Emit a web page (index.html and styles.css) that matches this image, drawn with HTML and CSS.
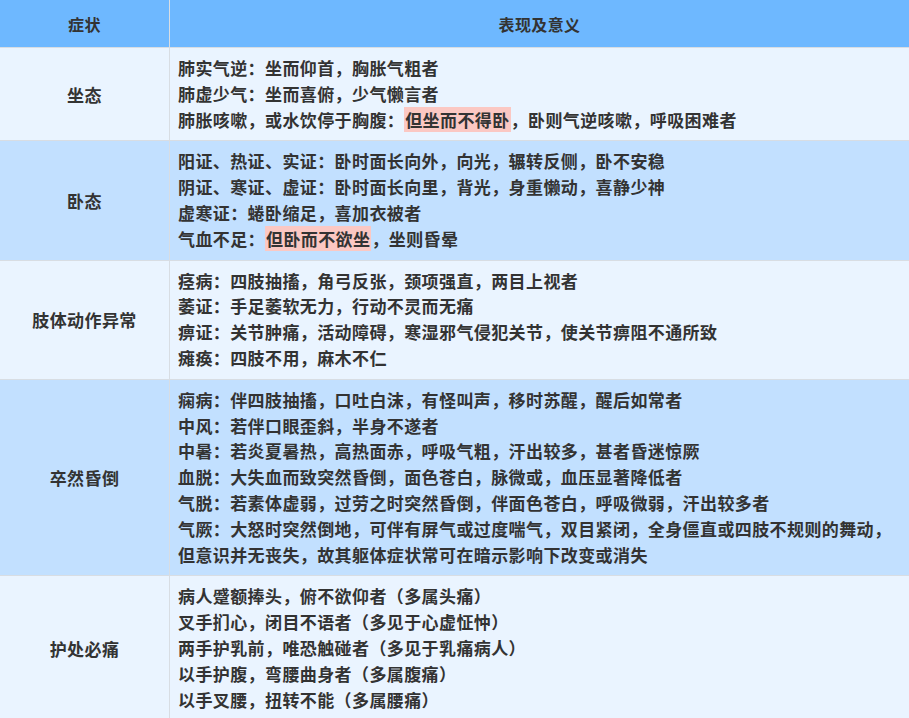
FILE: index.html
```html
<!DOCTYPE html>
<html lang="zh">
<head>
<meta charset="utf-8">
<link rel="stylesheet" href="styles.css">
</head>
<body>
<table class="sym">
  <thead>
    <tr><th class="c1">症状</th><th class="c2">表现及意义</th></tr>
  </thead>
  <tbody>
    <tr class="light">
      <td class="c1">坐态</td>
      <td class="c2">
        <div>肺实气逆：坐而仰首，胸胀气粗者</div>
        <div>肺虚少气：坐而喜俯，少气懒言者</div>
        <div>肺胀咳嗽，或水饮停于胸腹：<span class="hl">但坐而不得卧</span>，卧则气逆咳嗽，呼吸困难者</div>
      </td>
    </tr>
    <tr class="dark">
      <td class="c1">卧态</td>
      <td class="c2">
        <div>阳证、热证、实证：卧时面长向外，向光，辗转反侧，卧不安稳</div>
        <div>阴证、寒证、虚证：卧时面长向里，背光，身重懒动，喜静少神</div>
        <div>虚寒证：蜷卧缩足，喜加衣被者</div>
        <div>气血不足：<span class="hl">但卧而不欲坐</span>，坐则昏晕</div>
      </td>
    </tr>
    <tr class="light">
      <td class="c1">肢体动作异常</td>
      <td class="c2">
        <div>痉病：四肢抽搐，角弓反张，颈项强直，两目上视者</div>
        <div>萎证：手足萎软无力，行动不灵而无痛</div>
        <div>痹证：关节肿痛，活动障碍，寒湿邪气侵犯关节，使关节痹阻不通所致</div>
        <div>瘫痪：四肢不用，麻木不仁</div>
      </td>
    </tr>
    <tr class="dark">
      <td class="c1">卒然昏倒</td>
      <td class="c2">
        <div>痫病：伴四肢抽搐，口吐白沫，有怪叫声，移时苏醒，醒后如常者</div>
        <div>中风：若伴口眼歪斜，半身不遂者</div>
        <div>中暑：若炎夏暑热，高热面赤，呼吸气粗，汗出较多，甚者昏迷惊厥</div>
        <div>血脱：大失血而致突然昏倒，面色苍白，脉微或，血压显著降低者</div>
        <div>气脱：若素体虚弱，过劳之时突然昏倒，伴面色苍白，呼吸微弱，汗出较多者</div>
        <div>气厥：大怒时突然倒地，可伴有屏气或过度喘气，双目紧闭，全身僵直或四肢不规则的舞动，<br>但意识并无丧失，故其躯体症状常可在暗示影响下改变或消失</div>
      </td>
    </tr>
    <tr class="light">
      <td class="c1">护处必痛</td>
      <td class="c2">
        <div>病人蹙额捧头，俯不欲仰者（多属头痛）</div>
        <div>叉手扪心，闭目不语者（多见于心虚怔忡）</div>
        <div>两手护乳前，唯恐触碰者（多见于乳痛病人）</div>
        <div>以手护腹，弯腰曲身者（多属腹痛）</div>
        <div>以手叉腰，扭转不能（多属腰痛）</div>
      </td>
    </tr>
  </tbody>
</table>
</body>
</html>
```
FILE: styles.css
```css
html, body {
  margin: 0;
  padding: 0;
  background: #eaf4ff;
}
.sym {
  width: 909px;
  border-collapse: collapse;
  font-family: "Noto Sans CJK SC", "Noto Sans", sans-serif;
  font-size: 17px;
  font-weight: 600;
  color: #333;
  letter-spacing: 0.4px;
}
.sym th, .sym td {
  border: 1px solid #d8dde3;
  border-top: 0;
}
.sym th:first-child, .sym td:first-child { border-left: 0; }
.sym th:last-child, .sym td:last-child { border-right: 0; }
.sym th {
  background: #6eb8ff;
  height: 47px;
  padding: 0;
  font-weight: 700;
  font-size: 16px;
}
.sym tr.light td { background: #eaf4ff; border-top: 1px solid #d8dde3; }
.sym tr.dark td { background: #c2e0ff; border-top: 1px solid #d8dde3; }
.sym td.c1 {
  width: 169px;
  text-align: center;
  vertical-align: middle;
  padding: 0;
}
.sym td.c2 {
  padding: 7px 8px 8px 8px;
  line-height: 25.8px;
  text-align: left;
}
.hl {
  background: #fbc8c3;
  padding: 0 1px;
}
```
